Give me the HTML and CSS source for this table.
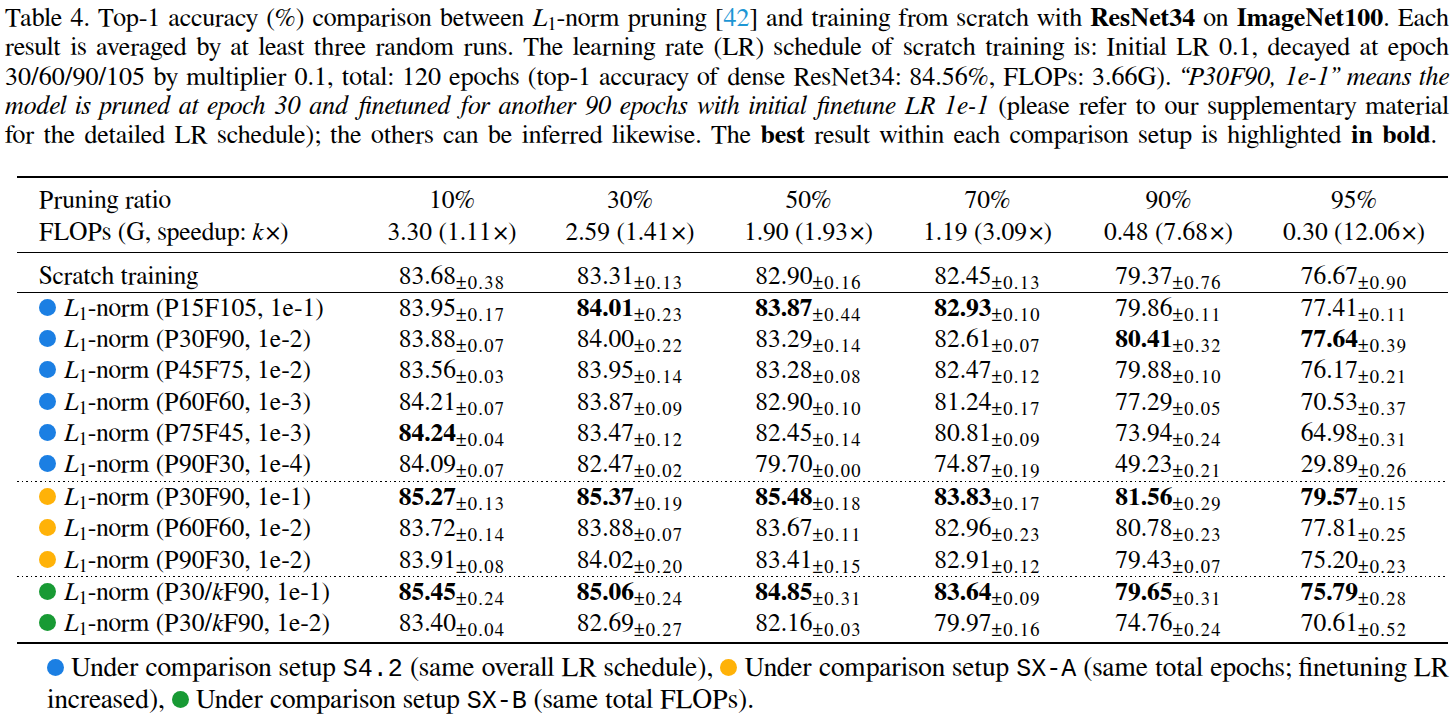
FILE: index.html
```html
<!DOCTYPE html>
<html lang="en">
<head>
<meta charset="utf-8">
<title>Table 4</title>
<link rel="stylesheet" href="styles.css">
</head>
<body>
<div class="page">
  <div class="caption">
    <span class="ln">Table 4. Top-1 accuracy (%) comparison between <i class="m">L</i><span class="sb">1</span>-norm pruning [<span class="cite">42</span>] and training from scratch with <b>ResNet34</b> on <b>ImageNet100</b>. Each</span>
    <span class="ln">result is averaged by at least three random runs. The learning rate (LR) schedule of scratch training is: Initial LR 0.1, decayed at epoch</span>
    <span class="ln">30/60/90/105 by multiplier 0.1, total: 120 epochs (top-1 accuracy of dense ResNet34: 84.56%, FLOPs: 3.66G). <i>“P30F90, 1e-1” means the</i></span>
    <span class="ln"><i>model is pruned at epoch 30 and finetuned for another 90 epochs with initial finetune LR 1e-1</i> (please refer to our supplementary material</span>
    <span class="ln last">for the detailed LR schedule); the others can be inferred likewise. The <b>best</b> result within each comparison setup is highlighted <b>in bold</b>.</span>
  </div>

  <table class="tbl">
    <colgroup>
      <col class="c-lbl">
      <col class="c-a"><col class="c-a"><col class="c-b"><col class="c-b"><col class="c-c"><col class="c-d">
    </colgroup>
    <tbody>
      <tr class="rule thick"><td colspan="7"></td></tr>
      <tr class="hdr first">
        <th class="lbl">Pruning ratio</th><th>10%</th><th>30%</th><th>50%</th><th>70%</th><th>90%</th><th>95%</th>
      </tr>
      <tr class="hdr last">
        <th class="lbl">FLOPs (G, speedup: <i class="m">k</i><span class="x">×</span>)</th>
        <th>3.30 (1.11<span class="x">×</span>)</th><th>2.59 (1.41<span class="x">×</span>)</th><th>1.90 (1.93<span class="x">×</span>)</th><th>1.19 (3.09<span class="x">×</span>)</th><th>0.48 (7.68<span class="x">×</span>)</th><th>0.30 (12.06<span class="x">×</span>)</th>
      </tr>
      <tr class="rule thin"><td colspan="7"></td></tr>
      <tr class="scratch">
        <td class="lbl">Scratch training</td>
        <td>83.68<span class="pm">±0.38</span></td><td>83.31<span class="pm">±0.13</span></td><td>82.90<span class="pm">±0.16</span></td><td>82.45<span class="pm">±0.13</span></td><td>79.37<span class="pm">±0.76</span></td><td>76.67<span class="pm">±0.90</span></td>
      </tr>
      <tr class="rule thin"><td colspan="7"></td></tr>

      <tr class="row">
        <td class="lbl"><span class="dot blue"></span><i class="m">L</i><span class="sb">1</span>-norm (P15F105, 1e-1)</td>
        <td>83.95<span class="pm">±0.17</span></td><td><b>84.01</b><span class="pm">±0.23</span></td><td><b>83.87</b><span class="pm">±0.44</span></td><td><b>82.93</b><span class="pm">±0.10</span></td><td>79.86<span class="pm">±0.11</span></td><td>77.41<span class="pm">±0.11</span></td>
      </tr>
      <tr class="row">
        <td class="lbl"><span class="dot blue"></span><i class="m">L</i><span class="sb">1</span>-norm (P30F90, 1e-2)</td>
        <td>83.88<span class="pm">±0.07</span></td><td>84.00<span class="pm">±0.22</span></td><td>83.29<span class="pm">±0.14</span></td><td>82.61<span class="pm">±0.07</span></td><td><b>80.41</b><span class="pm">±0.32</span></td><td><b>77.64</b><span class="pm">±0.39</span></td>
      </tr>
      <tr class="row">
        <td class="lbl"><span class="dot blue"></span><i class="m">L</i><span class="sb">1</span>-norm (P45F75, 1e-2)</td>
        <td>83.56<span class="pm">±0.03</span></td><td>83.95<span class="pm">±0.14</span></td><td>83.28<span class="pm">±0.08</span></td><td>82.47<span class="pm">±0.12</span></td><td>79.88<span class="pm">±0.10</span></td><td>76.17<span class="pm">±0.21</span></td>
      </tr>
      <tr class="row">
        <td class="lbl"><span class="dot blue"></span><i class="m">L</i><span class="sb">1</span>-norm (P60F60, 1e-3)</td>
        <td>84.21<span class="pm">±0.07</span></td><td>83.87<span class="pm">±0.09</span></td><td>82.90<span class="pm">±0.10</span></td><td>81.24<span class="pm">±0.17</span></td><td>77.29<span class="pm">±0.05</span></td><td>70.53<span class="pm">±0.37</span></td>
      </tr>
      <tr class="row">
        <td class="lbl"><span class="dot blue"></span><i class="m">L</i><span class="sb">1</span>-norm (P75F45, 1e-3)</td>
        <td><b>84.24</b><span class="pm">±0.04</span></td><td>83.47<span class="pm">±0.12</span></td><td>82.45<span class="pm">±0.14</span></td><td>80.81<span class="pm">±0.09</span></td><td>73.94<span class="pm">±0.24</span></td><td>64.98<span class="pm">±0.31</span></td>
      </tr>
      <tr class="row g1end">
        <td class="lbl"><span class="dot blue"></span><i class="m">L</i><span class="sb">1</span>-norm (P90F30, 1e-4)</td>
        <td>84.09<span class="pm">±0.07</span></td><td>82.47<span class="pm">±0.02</span></td><td>79.70<span class="pm">±0.00</span></td><td>74.87<span class="pm">±0.19</span></td><td>49.23<span class="pm">±0.21</span></td><td>29.89<span class="pm">±0.26</span></td>
      </tr>
      <tr class="rule dotted"><td colspan="7"></td></tr>

      <tr class="row">
        <td class="lbl"><span class="dot orange"></span><i class="m">L</i><span class="sb">1</span>-norm (P30F90, 1e-1)</td>
        <td><b>85.27</b><span class="pm">±0.13</span></td><td><b>85.37</b><span class="pm">±0.19</span></td><td><b>85.48</b><span class="pm">±0.18</span></td><td><b>83.83</b><span class="pm">±0.17</span></td><td><b>81.56</b><span class="pm">±0.29</span></td><td><b>79.57</b><span class="pm">±0.15</span></td>
      </tr>
      <tr class="row">
        <td class="lbl"><span class="dot orange"></span><i class="m">L</i><span class="sb">1</span>-norm (P60F60, 1e-2)</td>
        <td>83.72<span class="pm">±0.14</span></td><td>83.88<span class="pm">±0.07</span></td><td>83.67<span class="pm">±0.11</span></td><td>82.96<span class="pm">±0.23</span></td><td>80.78<span class="pm">±0.23</span></td><td>77.81<span class="pm">±0.25</span></td>
      </tr>
      <tr class="row">
        <td class="lbl"><span class="dot orange"></span><i class="m">L</i><span class="sb">1</span>-norm (P90F30, 1e-2)</td>
        <td>83.91<span class="pm">±0.08</span></td><td>84.02<span class="pm">±0.20</span></td><td>83.41<span class="pm">±0.15</span></td><td>82.91<span class="pm">±0.12</span></td><td>79.43<span class="pm">±0.07</span></td><td>75.20<span class="pm">±0.23</span></td>
      </tr>
      <tr class="rule dotted"><td colspan="7"></td></tr>

      <tr class="row">
        <td class="lbl"><span class="dot green"></span><i class="m">L</i><span class="sb">1</span>-norm (P30/<i class="m">k</i>F90, 1e-1)</td>
        <td><b>85.45</b><span class="pm">±0.24</span></td><td><b>85.06</b><span class="pm">±0.24</span></td><td><b>84.85</b><span class="pm">±0.31</span></td><td><b>83.64</b><span class="pm">±0.09</span></td><td><b>79.65</b><span class="pm">±0.31</span></td><td><b>75.79</b><span class="pm">±0.28</span></td>
      </tr>
      <tr class="row g3end">
        <td class="lbl"><span class="dot green"></span><i class="m">L</i><span class="sb">1</span>-norm (P30/<i class="m">k</i>F90, 1e-2)</td>
        <td>83.40<span class="pm">±0.04</span></td><td>82.69<span class="pm">±0.27</span></td><td>82.16<span class="pm">±0.03</span></td><td>79.97<span class="pm">±0.16</span></td><td>74.76<span class="pm">±0.24</span></td><td>70.61<span class="pm">±0.52</span></td>
      </tr>
      <tr class="rule thick"><td colspan="7"></td></tr>
    </tbody>
  </table>

  <div class="note">
    <span class="ln"><span class="dot blue"></span> Under comparison setup <code>S4.2</code> (same overall LR schedule), <span class="dot orange"></span> Under comparison setup <code>SX-A</code> (same total epochs; finetuning LR</span>
    <span class="ln last">increased), <span class="dot green"></span> Under comparison setup <code>SX-B</code> (same total FLOPs).</span>
  </div>
</div>
</body>
</html>
```

FILE: styles.css
```css
html, body {
  margin: 0;
  padding: 0;
  background: #ffffff;
  color: #000000;
}

.page {
  width: 1456px;
  height: 724px;
  overflow: hidden;
  padding-top: 4px;
  box-sizing: border-box;
  font-family: "FreeSerif", "Liberation Serif", "Times New Roman", serif;
}

/* ---------- caption ---------- */
.caption {
  margin: 0 7px 0 5px;
  font-size: 26px;
  line-height: 29.3px;
}

.caption .ln {
  display: block;
  text-align: justify;
  text-align-last: justify;
  white-space: nowrap;
}

.caption .ln.last {
  margin-right: 12px;
}

.cite {
  color: #1d96d4;
}

.m {
  font-style: italic;
}

.sb {
  font-size: 0.72em;
  vertical-align: -0.22em;
  line-height: 0;
}

/* ---------- table ---------- */
.tbl {
  margin: 25.5px 0 0 17px;
  width: 1431px;
  table-layout: fixed;
  border-collapse: collapse;
  border-spacing: 0;
  font-size: 25.5px;
}

.c-lbl { width: 346px; }
.c-a { width: 178px; }
.c-b { width: 179px; }
.c-c { width: 183px; }
.c-d { width: 188px; }

.tbl th,
.tbl td {
  padding: 0;
  text-align: center;
  font-weight: normal;
  white-space: nowrap;
}

.tbl .lbl {
  text-align: left;
  padding-left: 22px;
}

.tbl b {
  font-weight: bold;
}

.rule td {
  padding: 0;
  font-size: 0;
  line-height: 0;
}

.rule.thick td {
  height: 2px;
  background: #000;
}

.rule.thin td {
  height: 1px;
  background: #000;
}

.rule.dotted td {
  height: 1px;
  background: repeating-linear-gradient(to right, #000 0, #000 1.6px, transparent 1.6px, transparent 4.6px);
}

.hdr th {
  line-height: 32px;
}

.hdr.first th {
  padding-top: 7px;
}

.hdr.last th {
  padding-bottom: 3px;
}

.x {
  margin-left: 2px;
}

.scratch td {
  line-height: 31px;
  padding-top: 8px;
  padding-bottom: 0;
}

.row td {
  line-height: 31.2px;
}

.row.g1end td {
  padding-bottom: 1px;
}

.row.g3end td {
  padding-bottom: 3px;
}

.pm {
  font-size: 18.5px;
  letter-spacing: 1.3px;
  vertical-align: -5px;
  line-height: 0;
}

.dot {
  display: inline-block;
  width: 17px;
  height: 17px;
  border-radius: 50%;
  margin-right: 8px;
  vertical-align: baseline;
}

.dot.blue { background: #1b7fe3; }
.dot.orange { background: #ffb208; }
.dot.green { background: #189a34; }

/* ---------- note ---------- */
.note {
  margin: 9px 7px 0 47px;
  font-size: 27.5px;
  line-height: 31px;
}

.note .ln {
  display: block;
  text-align: justify;
  text-align-last: justify;
  white-space: nowrap;
}

.note .ln.last {
  text-align-last: left;
}

.note .dot {
  margin-right: 0;
}

code {
  font-family: "Liberation Mono", "Courier New", monospace;
  font-size: 25px;
}
```
